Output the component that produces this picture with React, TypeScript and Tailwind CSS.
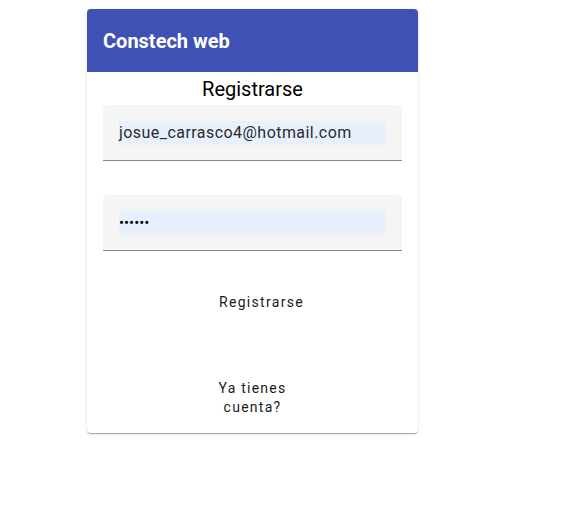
export default function App() {
  return (
    <div className="min-h-[530px] bg-white font-['Roboto',sans-serif]">
      <div className="ml-[87px] pt-[9px] w-[331px]">
        <div className="rounded-[4px] bg-white shadow-[0_2px_1px_-1px_rgba(0,0,0,0.2),0_1px_1px_0_rgba(0,0,0,0.14),0_1px_3px_0_rgba(0,0,0,0.12)] overflow-hidden">
          <div className="h-[63px] bg-[#3f51b5] flex items-center px-4">
            <h1 className="text-[20px] font-bold text-white">Constech web</h1>
          </div>
          <div className="px-4">
            <h2 className="text-center text-[20px] leading-[32px] text-black pt-[1px]">Registrarse</h2>
            <div className="h-[56px] bg-[#f5f5f5] rounded-t-[4px] border-b border-[#8a8a8a] px-4 pt-4">
              <div className="h-[24px] bg-[#e8f0fe] text-[16px] leading-[24px] text-[#2b2b2b] tracking-[0.45px]">
                josue_carrasco4@hotmail.com
              </div>
            </div>
            <div className="h-[34px]" />
            <div className="h-[56px] bg-[#f5f5f5] rounded-t-[4px] border-b border-[#8a8a8a] px-4 pt-4">
              <div className="h-[24px] bg-[#e8f0fe] text-[15px] leading-[24px] text-black tracking-[0px]">
                ••••••
              </div>
            </div>
            <div className="flex justify-center pt-[33px] pl-[18px]">
              <button className="h-9 px-4 text-[14px] font-normal tracking-[1.3px] text-[#1a1a1a]">Registrarse</button>
            </div>
            <div className="flex justify-center pt-[59px] pb-[16px]">
              <button className="w-[88px] text-[14px] leading-[19px] font-normal tracking-[1.25px] text-[#1a1a1a]">
                Ya tienes cuenta?
              </button>
            </div>
          </div>
        </div>
      </div>
    </div>
  );
}
